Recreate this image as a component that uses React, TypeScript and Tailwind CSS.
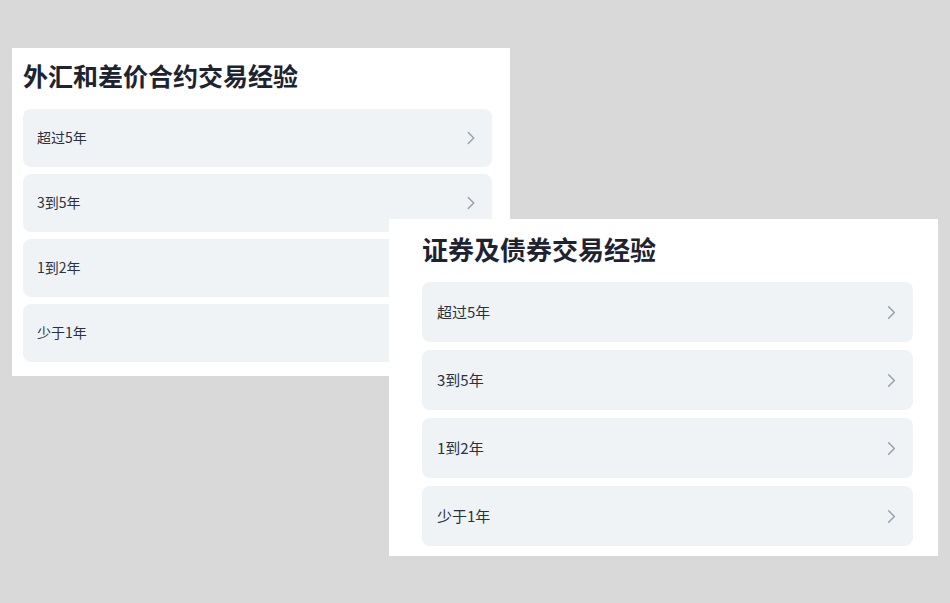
import { ChevronRight } from "lucide-react";

const options = ["超过5年", "3到5年", "1到2年", "少于1年"];

type CardProps = {
  title: string;
  className: string;
  pad: string;
  titleSize: string;
  titleGap: string;
  rowH: string;
  rowGap: string;
  rowPad: string;
  textSize: string;
  iconSize: number;
};

function ExperienceCard({ title, className, pad, titleSize, titleGap, rowH, rowGap, rowPad, textSize, iconSize }: CardProps) {
  return (
    <section className={`absolute bg-white flex flex-col ${className} ${pad}`}>
      <h2 className={`font-bold text-[#1d2331] leading-[1.5] ${titleSize} ${titleGap}`}>{title}</h2>
      <div className={`flex flex-col ${rowGap}`}>
        {options.map((o) => (
          <div
            key={o}
            className={`flex items-center justify-between rounded-lg bg-[#f0f3f6] ${rowH} ${rowPad}`}
          >
            <span className={`text-[#2b313c] ${textSize}`}>{o}</span>
            <ChevronRight size={iconSize} strokeWidth={1.6} className="text-[#9aa1ad]" />
          </div>
        ))}
      </div>
    </section>
  );
}

export default function App() {
  return (
    <div
      className="relative w-[950px] h-[603px] overflow-hidden bg-[#d9d9d9]"
      style={{ fontFamily: '"Noto Sans CJK SC", "Noto Sans", sans-serif' }}
    >
      <ExperienceCard
        title="外汇和差价合约交易经验"
        className="left-[12px] top-[48px] w-[498px] h-[328px]"
        pad="pl-[11px] pr-[18px] pt-[9px] pb-[14px]"
        titleSize="text-[25px]"
        titleGap="mb-[14px]"
        rowH="h-[58px]"
        rowGap="gap-[7px]"
        rowPad="pl-[14px] pr-[10px]"
        textSize="text-[14px]"
        iconSize={22}
      />
      <ExperienceCard
        title="证券及债券交易经验"
        className="left-[389px] top-[219px] w-[549px] h-[337px]"
        pad="pl-[33px] pr-[25px] pt-[10px] pb-[10px]"
        titleSize="text-[26px]"
        titleGap="mb-[14px]"
        rowH="h-[60px]"
        rowGap="gap-[8px]"
        rowPad="pl-[15px] pr-[10px]"
        textSize="text-[15px]"
        iconSize={23}
      />
    </div>
  );
}
